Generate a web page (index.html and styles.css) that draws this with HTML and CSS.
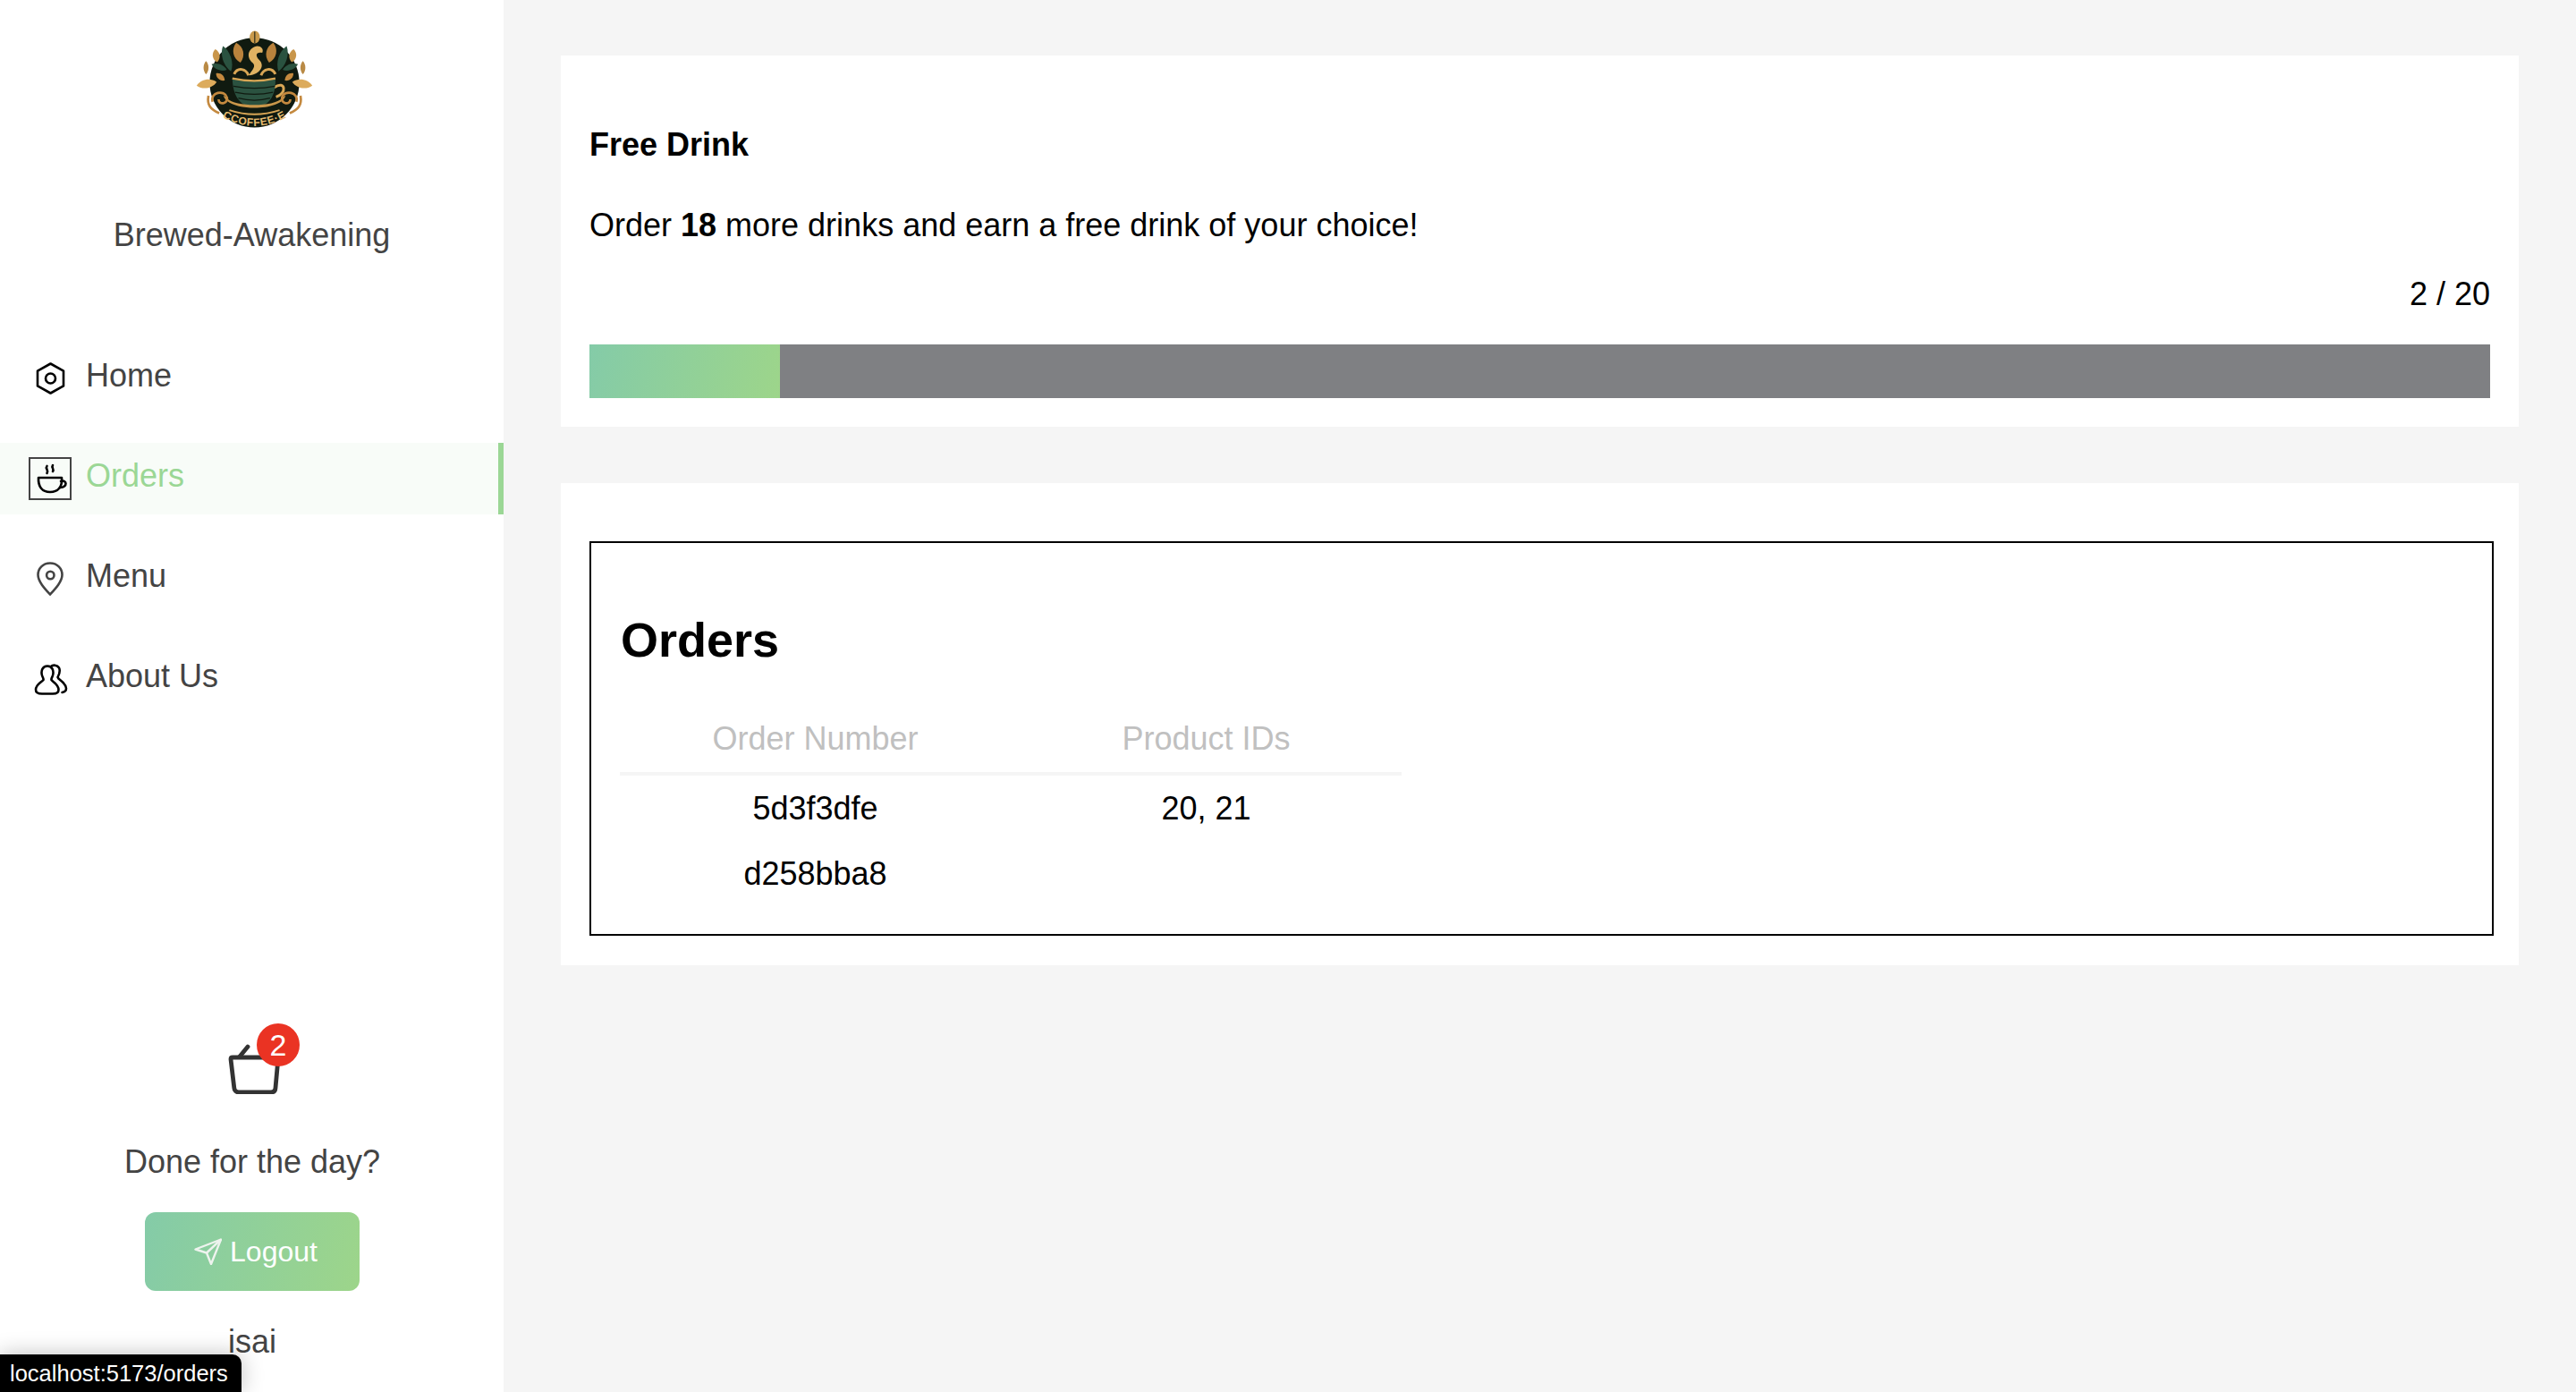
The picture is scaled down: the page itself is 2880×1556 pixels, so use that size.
FILE: index.html
```html
<!DOCTYPE html>
<html lang="en">

<head>
    <meta charset="UTF-8">
    <meta name="viewport" content="width=device-width, initial-scale=1.0">
    <title>Brewed-Awakening</title>
    <link rel="stylesheet" href="styles.css">
</head>

<body>
    <div class="app">
        <!-- sidebar -->
        <aside class="sidebar">
            <svg class="logo" viewBox="0 0 392 328" aria-label="Coffee logo">
                <defs>
                    <path id="logoArc" d="M76 282 Q196 356 316 282" />
                    <path id="leaf" d="M0 -34 C22 -16 22 16 0 34 C-22 16 -22 -16 0 -34 Z" />
                </defs>
                <!-- dark badge -->
                <ellipse cx="196" cy="174" rx="150" ry="150" fill="#101a10" />
                <ellipse cx="197" cy="22" rx="17" ry="21" fill="#c99a4b" />
                <path d="M197 3 V41" stroke="#101a10" stroke-width="3" />
                <!-- leaves -->
                <use href="#leaf" transform="translate(142 74) rotate(-12)" fill="#b9823c" />
                <use href="#leaf" transform="translate(252 74) rotate(12)" fill="#b9823c" />
                <use href="#leaf" transform="translate(104 94) rotate(-18) scale(.85 1.3)" fill="#2a5240" />
                <use href="#leaf" transform="translate(290 94) rotate(18) scale(.85 1.3)" fill="#2a5240" />
                <use href="#leaf" transform="translate(68 84) rotate(-8) scale(.7 .65)" fill="#c9964a" />
                <use href="#leaf" transform="translate(324 84) rotate(8) scale(.7 .65)" fill="#c9964a" />
                <use href="#leaf" transform="translate(34 124) scale(.5 .65)" fill="#b98a45" />
                <use href="#leaf" transform="translate(358 124) scale(.5 .65)" fill="#b98a45" />
                <use href="#leaf" transform="translate(78 122) rotate(-70) scale(.6 .8)" fill="#2a5240" />
                <use href="#leaf" transform="translate(316 122) rotate(70) scale(.6 .8)" fill="#2a5240" />
                <use href="#leaf" transform="translate(36 178) rotate(80) scale(.85 1)" fill="#dcab5c" />
                <use href="#leaf" transform="translate(356 178) rotate(-80) scale(.85 1)" fill="#dcab5c" />
                <use href="#leaf" transform="translate(82 155) rotate(-50) scale(.55 .55)" fill="#c4893f" />
                <use href="#leaf" transform="translate(312 155) rotate(50) scale(.55 .55)" fill="#c4893f" />
                <!-- steam -->
                <path d="M205 52 C170 60 170 92 190 108 C205 122 180 140 178 150 C215 145 232 118 212 98 C198 84 200 70 222 74 C228 62 218 52 205 52 Z" fill="#e0b262" />
                <path d="M128 146 C140 120 168 128 176 150 M266 146 C254 120 226 128 218 150" fill="none" stroke="#d8a655" stroke-width="9" />
                <!-- cup -->
                <path d="M262 190 C300 165 306 210 268 222" fill="none" stroke="#d8a655" stroke-width="9" />
                <path d="M122 160 Q196 176 266 160 C268 220 244 254 196 256 C148 254 124 220 122 160 Z" fill="#2b5240" />
                <path d="M126 186 Q196 200 264 186 M131 206 Q196 220 258 206 M142 226 Q196 240 248 226" fill="none" stroke="#101a10" stroke-width="4" />
                <path d="M122 160 Q196 176 266 160" fill="none" stroke="#d8a655" stroke-width="7" />
                <!-- saucer -->
                <path d="M104 226 C130 256 262 256 288 226 L300 216 C290 272 102 272 92 216 Z" fill="#c9964a" />
                <path d="M112 266 Q196 294 280 266" fill="none" stroke="#d8a655" stroke-width="6" />
                <!-- scrolls -->
                <path d="M56 238 C46 206 96 196 104 224 C108 246 76 250 76 230 M78 276 C50 264 36 250 42 218" fill="none" stroke="#c4893f" stroke-width="8" />
                <path d="M336 238 C346 206 296 196 288 224 C284 246 316 250 316 230 M314 276 C342 264 356 250 350 218" fill="none" stroke="#c4893f" stroke-width="8" />
                <text class="logo-text"><textPath href="#logoArc" startOffset="50%" text-anchor="middle">CCOFFEE·E</textPath></text>
            </svg>
            <div class="brand">Brewed-Awakening</div>

            <nav class="nav">
                <a href="#" class="nav-item">
                    <span class="nav-icon">
                        <svg viewBox="0 0 48 48" fill="none" stroke="#000" stroke-width="2.6" stroke-linejoin="round">
                            <path d="M24.500 7.5 L39 15.6 V32.4 L24.500 40.5 L10 32.4 V15.6 Z" />
                            <circle cx="24.500" cy="24" r="5.5" />
                        </svg>
                    </span>
                    <span>Home</span>
                </a>
                <a href="#" class="nav-item active">
                    <span class="nav-icon">
                        <svg viewBox="0 0 44 44" fill="none" stroke="#000" stroke-width="2.6" stroke-linecap="round" stroke-linejoin="round">
                            <path d="M9 21 H35 C36 31 31 37 22 37 C13 37 8.500 31 9 21 Z" />
                            <path d="M34 25 C41 23 42 31 33 32" />
                            <path d="M18.500 8 C16 11 21 12 18.500 16 M25 7 C23 10 27 11 25 14" />
                        </svg>
                    </span>
                    <span>Orders</span>
                </a>
                <a href="#" class="nav-item">
                    <span class="nav-icon">
                        <svg viewBox="0 0 48 48" fill="none" stroke="#444" stroke-width="2.6" stroke-linejoin="round">
                            <path d="M24 6.500 C32 6.500 37.500 12.500 37.500 19.500 C37.500 27 30 35 24 41.500 C18 35 10.500 27 10.500 19.500 C10.500 12.500 16 6.500 24 6.500 Z" />
                            <circle cx="24.300" cy="20" r="4.200" />
                        </svg>
                    </span>
                    <span>Menu</span>
                </a>
                <a href="#" class="nav-item">
                    <span class="nav-icon">
                        <svg viewBox="0 0 48 48" fill="none" stroke="#000" stroke-width="2.6" stroke-linecap="round" stroke-linejoin="round">
                            <path d="M21 9.500 C15.500 9.500 13.500 15 15 20 C15.600 22 17 23.500 16.500 25 C14 28 8 30 8 36 C8 39.500 11 40.500 15 40.500 H27 C31 40.500 33.500 39.500 33.500 36 C33.500 30 27.500 28 25.500 25 C25 23.500 26.500 22 27 20 C28.500 15 26.500 9.500 21 9.500 Z" />
                            <path d="M25 10 C27 8 32 8 34 11.500 C36 15.500 34 19 32.500 22 C33 25 41.500 27.500 42 34.500 C42 37 40.500 38.500 37.500 39" />
                        </svg>
                    </span>
                    <span>About Us</span>
                </a>
            </nav>

            <div class="side-footer">
                <div class="basket">
                    <svg viewBox="0 0 58 56" fill="none" stroke="#333" stroke-width="4.800" stroke-linecap="round" stroke-linejoin="round">
                        <path d="M3 17 C3 15.500 4 15 5 15 H53 C55 15 56 16 55.800 18 L53 49 C52.800 52 51 54 48 54 H12 C9 54 7 52 6.800 49 Z" />
                        <path d="M13 14 L22 3" />
                    </svg>
                    <span class="badge">2</span>
                </div>
                <p class="done">Done for the day?</p>
                <button class="logout">
                    <svg viewBox="0 0 31 30" fill="none" stroke="#eef3ee" stroke-width="2.400" stroke-linejoin="round">
                        <path d="M30 1.500 L1.500 12.500 L14 16.500 L19 29 Z" />
                        <path d="M30 1.500 L14 16.500" />
                    </svg>
                    Logout
                </button>
                <div class="username">isai</div>
            </div>
        </aside>

        <!-- content -->
        <main class="content">
            <section class="card reward">
                <div class="reward-title">Free Drink</div>
                <p class="reward-text">Order <b>18</b> more drinks and earn a free drink of your choice!</p>
                <div class="reward-count">2 / 20</div>
                <div class="progress">
                    <div class="progress-fill" style="width: 10%"></div>
                </div>
            </section>

            <section class="card orders-card">
                <div class="orders-box">
                    <h2>Orders</h2>
                    <table class="orders-table">
                        <thead>
                            <tr>
                                <th>Order Number</th>
                                <th>Product IDs</th>
                            </tr>
                        </thead>
                        <tbody>
                            <tr>
                                <td>5d3f3dfe</td>
                                <td>20, 21</td>
                            </tr>
                            <tr>
                                <td>d258bba8</td>
                                <td></td>
                            </tr>
                        </tbody>
                    </table>
                </div>
            </section>
        </main>
    </div>

    <!-- browser link preview -->
    <div class="status-bar">localhost:5173/orders</div>
</body>

</html>
```

FILE: styles.css
```css
* {
    padding: 0;
    margin: 0;
    box-sizing: border-box;
}

a {
    text-decoration: none;
}

body {
    position: relative;
    font-family: "Liberation Sans", Arial, sans-serif;
    font-size: 36px;
    line-height: 42px;
    color: #000;
    background-color: #f5f5f5;
    overflow: hidden;
}

.app {
    display: flex;
    height: 100vh;
}

.sidebar {
    display: flex;
    flex-direction: column;
    align-items: center;
    flex: 0 0 563px;
    padding-top: 34px;
    background-color: #fff;
    color: #444;
}

.logo {
    display: block;
    flex: none;
    width: 131px;
    height: 110px;
    margin-left: 6px;
}

.logo-text {
    font-family: "Liberation Sans", Arial, sans-serif;
    font-size: 36px;
    font-weight: 700;
    letter-spacing: 2px;
    fill: #e6bc70;
}

.brand {
    margin-top: 98px;
}

.nav {
    display: flex;
    flex-direction: column;
    gap: 32px;
    width: 100%;
    margin-top: 99px;
}

.nav-item {
    display: flex;
    align-items: flex-start;
    gap: 16px;
    height: 80px;
    padding: 16px 0 0 32px;
    color: #444;
}

.nav-item.active {
    color: #9bd795;
    background-color: #f8fcf8;
    border-right: 6px solid #9bd795;
}

.nav-icon {
    display: flex;
    flex: none;
    width: 48px;
    height: 48px;
}

.nav-icon svg {
    width: 100%;
    height: 100%;
}

.active .nav-icon {
    border: 2px solid #444;
}

.side-footer {
    display: flex;
    flex-direction: column;
    align-items: center;
    margin-top: auto;
    margin-left: 1px;
    padding-bottom: 35px;
}

.basket {
    position: relative;
    width: 58px;
    height: 56px;
    margin-left: 4px;
}

.basket svg {
    display: block;
    width: 100%;
    height: 100%;
}

.badge {
    position: absolute;
    top: -23px;
    left: 32px;
    width: 48px;
    height: 48px;
    border-radius: 50%;
    background-color: #ea3323;
    color: #fff;
    font-size: 34px;
    line-height: 48px;
    text-align: center;
}

.done {
    margin-top: 55px;
}

.logout {
    display: flex;
    align-items: center;
    justify-content: center;
    gap: 9px;
    width: 240px;
    height: 88px;
    margin-top: 35px;
    padding-left: 8px;
    border: 0;
    border-radius: 12px;
    background: linear-gradient(105deg, #84cba8, #9dd58a);
    color: #fff;
    font-family: inherit;
    font-size: 32px;
}

.logout svg {
    width: 31px;
    height: 30px;
}

.username {
    margin-top: 36px;
}

.content {
    flex: 1;
    padding: 62px 64px 0 64px;
}

.card {
    background-color: #fff;
}

.reward {
    padding: 79px 32px 32px;
}

.reward-title {
    font-weight: 700;
}

.reward-text {
    margin-top: 48px;
}

.reward-count {
    margin-top: 35px;
    text-align: right;
}

.progress {
    height: 60px;
    margin-top: 35px;
    background-color: #7f8083;
}

.progress-fill {
    height: 100%;
    background: linear-gradient(105deg, #84cba8, #9dd58a);
}

.orders-card {
    margin-top: 63px;
    padding: 65px 28px 33px 32px;
}

.orders-box {
    padding: 77px 32px 31px;
    border: 2px solid #000;
}

.orders-box h2 {
    margin-left: 1px;
    font-size: 54px;
    line-height: 62px;
}

.orders-table {
    width: 874px;
    margin-top: 45px;
    table-layout: fixed;
    border-collapse: collapse;
}

.orders-table th {
    height: 74px;
    padding-bottom: 2px;
    border-bottom: 4px solid #f5f5f5;
    color: #c0c0c0;
    font-weight: 400;
}

.orders-table td {
    height: 74px;
    padding-top: 2px;
    text-align: center;
}

.status-bar {
    position: absolute;
    left: 0;
    bottom: 0;
    width: 270px;
    height: 42px;
    padding-left: 11px;
    border-top-right-radius: 10px;
    background-color: #000;
    box-shadow: 0 0 24px rgba(0, 0, 0, .25);
    color: #fff;
    font-size: 25.500px;
    line-height: 42px;
    white-space: nowrap;
}
```
